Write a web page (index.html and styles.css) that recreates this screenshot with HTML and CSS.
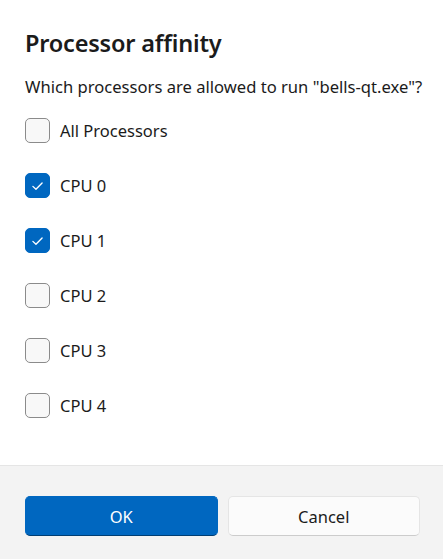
FILE: index.html
```html
<!DOCTYPE html>
<html>
<head>
<meta charset="utf-8">
<link rel="stylesheet" href="styles.css">
</head>
<body>
<div class="dialog">
  <div class="content">
    <h1 class="title">Processor affinity</h1>
    <p class="question">Which processors are allowed to run "bells-qt.exe"?</p>
    <div class="list">
      <label class="row"><span class="box"></span><span class="label">All Processors</span></label>
      <label class="row"><span class="box checked"><svg viewBox="0 0 24 24" width="24" height="24"><path d="M7.2 12.4 L10.4 15.4 L16.8 8.8" fill="none" stroke="#fff" stroke-width="1.4" stroke-linecap="round" stroke-linejoin="round"/></svg></span><span class="label">CPU 0</span></label>
      <label class="row"><span class="box checked"><svg viewBox="0 0 24 24" width="24" height="24"><path d="M7.2 12.4 L10.4 15.4 L16.8 8.8" fill="none" stroke="#fff" stroke-width="1.4" stroke-linecap="round" stroke-linejoin="round"/></svg></span><span class="label">CPU 1</span></label>
      <label class="row"><span class="box"></span><span class="label">CPU 2</span></label>
      <label class="row"><span class="box"></span><span class="label">CPU 3</span></label>
      <label class="row"><span class="box"></span><span class="label">CPU 4</span></label>
    </div>
  </div>
  <div class="footer">
    <button class="btn primary">OK</button>
    <button class="btn secondary">Cancel</button>
  </div>
</div>
</body>
</html>
```
FILE: styles.css
```css
* { box-sizing: border-box; }
html, body { margin: 0; padding: 0; background: #fff; }
body {
  font-family: "Noto Sans", "Open Sans", sans-serif;
  color: #1b1b1b;
  width: 443px;
  height: 559px;
  overflow: hidden;
}
.dialog { display: flex; flex-direction: column; height: 559px; }
.content { flex: 1; padding: 26px 25px 0 25px; }
.title {
  margin: 0;
  font-size: 23.5px;
  font-weight: 600;
  line-height: 34px;
  letter-spacing: -0.2px;
}
.question {
  margin: 15px 0 0 0;
  font-size: 16.6px;
  line-height: 24px;
  white-space: nowrap;
}
.list { display: flex; flex-direction: column; gap: 30px; margin-top: 19px; }
.row { display: flex; align-items: center; height: 25px; gap: 10px; }
.box {
  width: 25px; height: 25px;
  border: 1px solid #8b8b8b;
  border-radius: 5px;
  background: #f8f8f8;
  display: flex; align-items: center; justify-content: center;
  flex: none;
}
.box.checked { background: #0067c0; border-color: #0067c0; }
.label { font-size: 16.5px; line-height: 24px; }
.footer {
  height: 94px;
  background: #f3f3f3;
  border-top: 1px solid #e5e5e5;
  padding: 30px 23px 0 25px;
  display: flex;
  gap: 10px;
  align-items: flex-start;
}
.btn {
  flex: 1;
  height: 40px;
  border-radius: 5px;
  font-family: inherit;
  font-size: 16.5px;
}
.primary {
  background: #0067c0;
  color: #fff;
  border: 1px solid #0067c0;
  border-bottom-color: #003e73;
}
.secondary {
  background: #fbfbfb;
  color: #1b1b1b;
  border: 1px solid #e5e5e5;
  border-bottom-color: #cccccc;
}
```
